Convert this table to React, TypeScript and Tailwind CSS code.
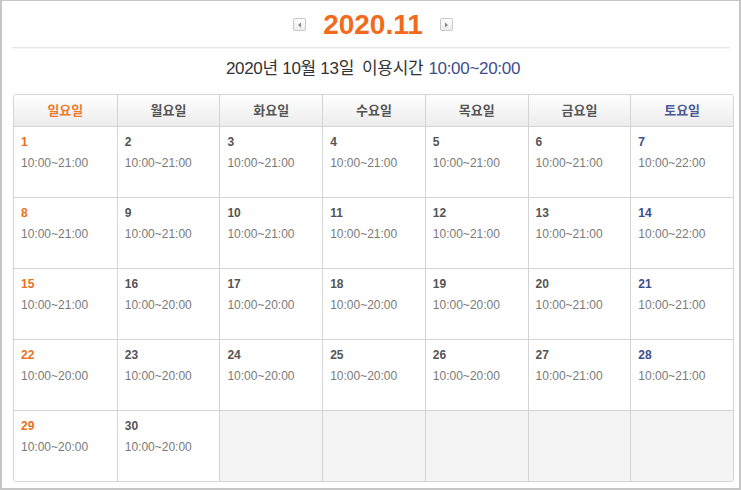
const days = ["일요일", "월요일", "화요일", "수요일", "목요일", "금요일", "토요일"];

const hours: (string | null)[] = [
  "10:00~21:00", "10:00~21:00", "10:00~21:00", "10:00~21:00", "10:00~21:00", "10:00~21:00", "10:00~22:00",
  "10:00~21:00", "10:00~21:00", "10:00~21:00", "10:00~21:00", "10:00~21:00", "10:00~21:00", "10:00~22:00",
  "10:00~21:00", "10:00~20:00", "10:00~20:00", "10:00~20:00", "10:00~20:00", "10:00~21:00", "10:00~21:00",
  "10:00~20:00", "10:00~20:00", "10:00~20:00", "10:00~20:00", "10:00~20:00", "10:00~21:00", "10:00~21:00",
  "10:00~20:00", "10:00~20:00", null, null, null, null, null,
];

const dayColor = (i: number) =>
  i === 0 ? "text-[#e8711f]" : i === 6 ? "text-[#3e4d8c]" : "text-[#555]";

const Arrow = ({ dir }: { dir: "left" | "right" }) => (
  <span className="flex h-[13px] w-[13px] items-center justify-center rounded-[2px] border border-[#c9c9c9] bg-gradient-to-b from-white to-[#ececec]">
    <svg width="5" height="6" viewBox="0 0 5 6">
      {dir === "left" ? (
        <path d="M4 0.5 L1 3 L4 5.5 Z" fill="#888" />
      ) : (
        <path d="M1 0.5 L4 3 L1 5.5 Z" fill="#888" />
      )}
    </svg>
  </span>
);

export default function App() {
  return (
    <div
      className="h-[491px] w-[741px] bg-white"
      style={{ fontFamily: '"Liberation Sans", "Noto Sans CJK KR", sans-serif' }}
    >
      <div className="h-[490px] w-[741px] border-2 border-t border-[#c6c6c6] pl-[11px]">
        {/* month header */}
        <div className="flex h-[46px] w-[720px] items-center justify-center gap-[17px] pt-[1px]">
          <Arrow dir="left" />
          <span className="text-[28px] font-bold leading-none text-[#f26a1b]">
            2020.11
          </span>
          <Arrow dir="right" />
        </div>
        <div className="ml-[-1px] h-[2px] w-[718px] border-t border-[#e6e6e6] bg-[#f6f6f6]" />

        <div className="flex h-[45px] w-[720px] items-center justify-center pb-[6px] text-[17px] tracking-[-0.3px] text-[#333]">
          <span>2020년 10월 13일</span>
          <span className="ml-[8px]">이용시간</span>
          <span className="ml-[5px] text-[#3d4e8e]">10:00~20:00</span>
        </div>

        {/* calendar */}
        <div className="w-[721px] overflow-hidden rounded-[3px] border border-[#d4d4d4]">
          <div className="grid grid-cols-7 bg-gradient-to-b from-white to-[#ececec]">
            {days.map((d, i) => (
              <div
                key={d}
                className={`flex h-[31px] items-center justify-center border-l border-[#d4d4d4] text-[13px] font-bold first:border-l-0 ${
                  i === 0 ? "text-[#ee7a2c]" : i === 6 ? "text-[#4a5a95]" : "text-[#555]"
                }`}
              >
                {d}
              </div>
            ))}
          </div>
          <div className="grid grid-cols-7">
            {hours.map((h, idx) => {
              const col = idx % 7;
              return (
                <div
                  key={idx}
                  className={`h-[71px] border-t border-l border-[#d4d4d4] px-[7px] pt-[8px] ${
                    col === 0 ? "border-l-0" : ""
                  } ${h ? "bg-white" : "bg-[#f4f4f4]"}`}
                >
                  {h && (
                    <>
                      <div className={`text-[12px] font-bold leading-[14px] ${dayColor(col)}`}>
                        {idx + 1}
                      </div>
                      <div className="mt-[7px] text-[12px] leading-[14px] text-[#7a7a7a]">
                        {h}
                      </div>
                    </>
                  )}
                </div>
              );
            })}
          </div>
        </div>
      </div>
    </div>
  );
}
